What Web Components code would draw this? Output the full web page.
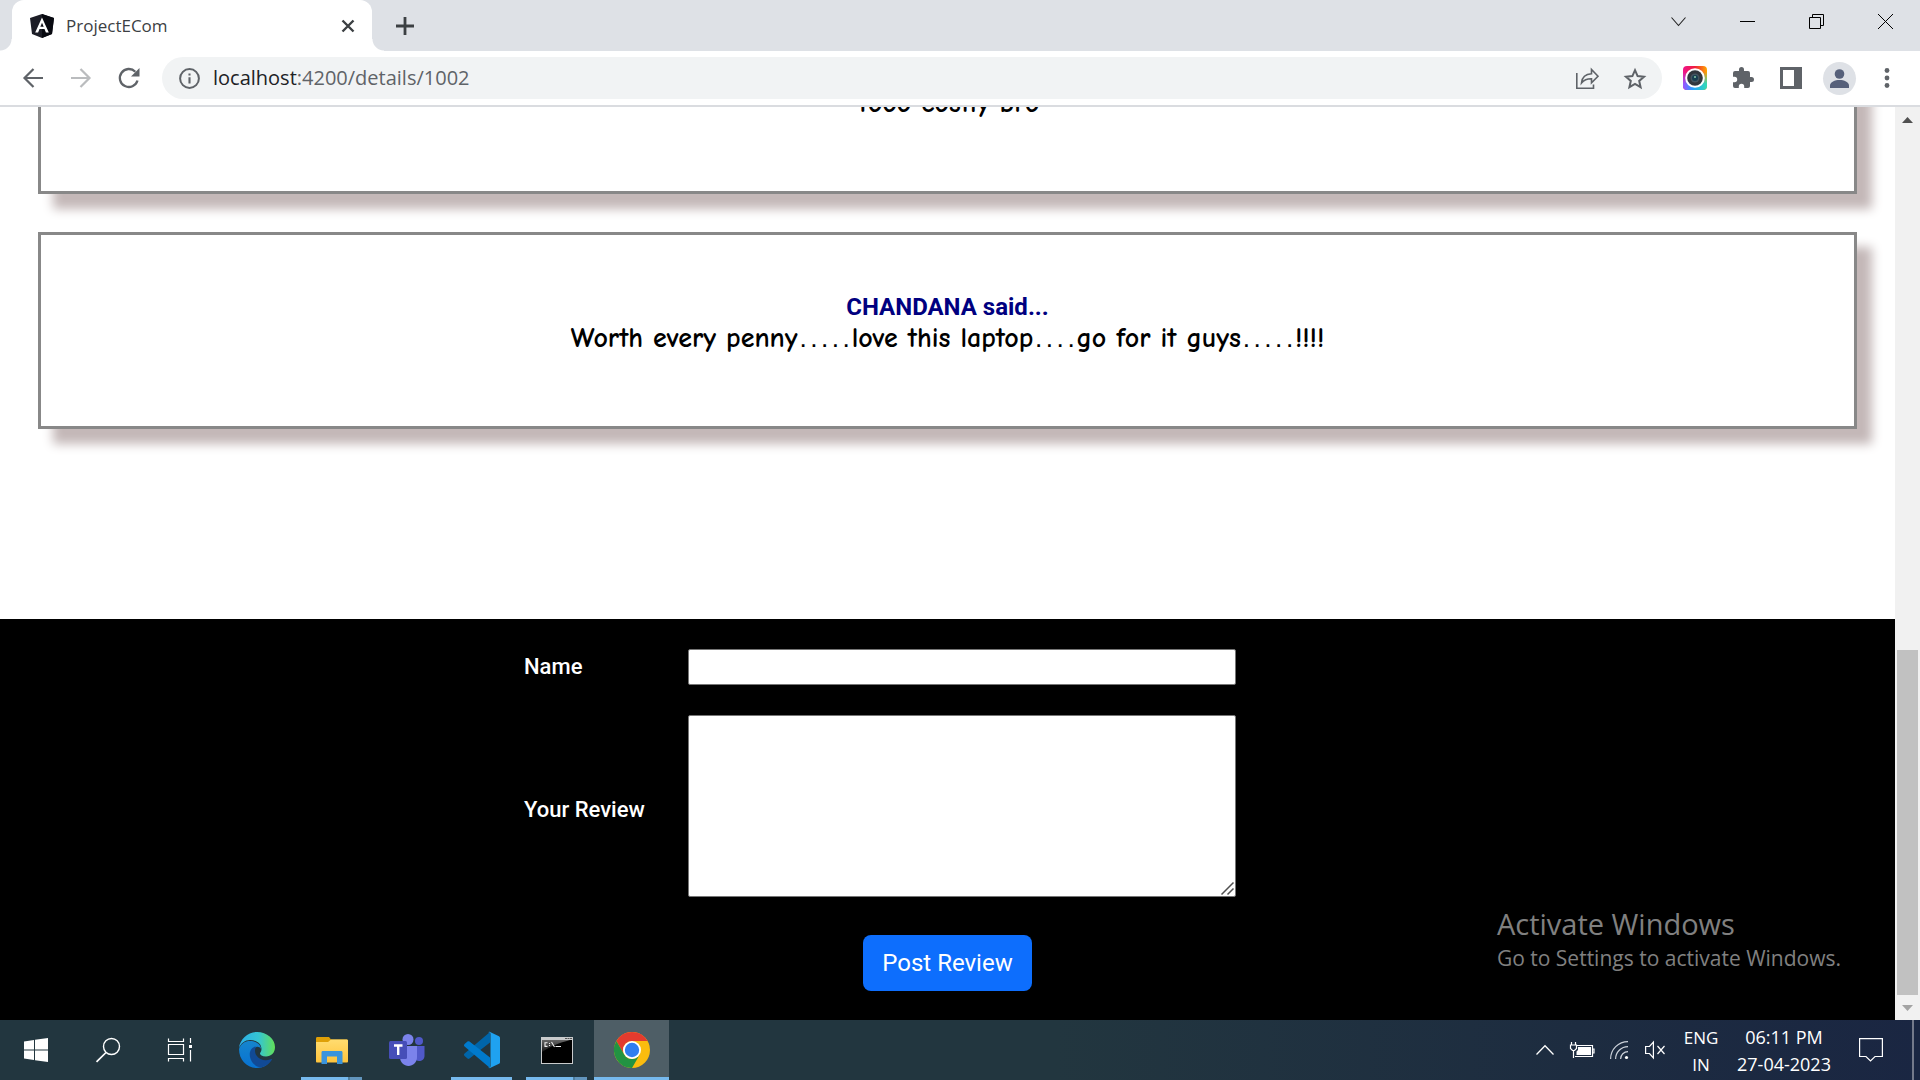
<!DOCTYPE html>
<html lang="en">
<head>
<meta charset="utf-8">
<title>ProjectECom</title>
<style>
html, body { margin: 0; height: 100%; }
body { font-family: "Open Sans", "Noto Sans", sans-serif; overflow: hidden; }
</style>
</head>
<body>
<desktop-screen></desktop-screen>
<script>
const base = `<style>
*, *::before, *::after { box-sizing: border-box; }
button { border: 0; padding: 0; margin: 0; background: none; color: inherit; font: inherit; cursor: pointer; display: flex; align-items: center; justify-content: center; }
svg { display: block; flex: none; overflow: visible; }
</style>`;
function define(name, html) {
  const template = document.createElement('template');
  template.innerHTML = base + html;
  customElements.define(name, class extends HTMLElement {
    constructor() {
      super();
      this.attachShadow({ mode: 'open' }).append(template.content.cloneNode(true));
    }
  });
}

define('browser-tabs', `<style>
:host { display: flex; height: 51px; background: #dee1e6; padding-left: 12px; color: #3c4043; }
.tab { position: relative; width: 360px; height: 51px; background: #fff; border-radius: 12px 12px 0 0; display: flex; align-items: center; gap: 12px; padding: 0 12px 0 18px; }
.tab::before, .tab::after { content: ""; position: absolute; bottom: 0; width: 12px; height: 12px; }
.tab::before { right: 100%; background: radial-gradient(circle at 0 0, transparent 11px, #fff 12px); }
.tab::after { left: 100%; background: radial-gradient(circle at 100% 0, transparent 11px, #fff 12px); }
.title { flex: 1; font-size: 17px; line-height: 24px; }
.close { width: 24px; height: 24px; }
.new { width: 42px; height: 51px; margin-left: 12px; }
.controls { margin-left: auto; display: flex; color: #000; }
.controls button { width: 69px; height: 43px; }
</style>
<div class="tab">
  <svg width="24" height="24" viewBox="0 0 24 24"><path d="M12 0 24 4l-2 16-10 4L2 20 0 4z" fill="#1c1d26"/><path d="M12 0 24 4l-2 16-10 4z" fill="#080910"/><path d="M12 3.4 5.2 18.6h2.9l1.4-3.5h5l1.4 3.5h2.9zM12 8.8l1.7 4h-3.4z" fill="#fff" fill-rule="evenodd"/></svg>
  <span class="title">ProjectECom</span>
  <button class="close" aria-label="Close tab"><svg width="12" height="12" viewBox="0 0 12 12"><path d="M.5.5l11 11M11.500.5l-11 11" stroke="#3c4043" stroke-width="2.400"/></svg></button>
</div>
<button class="new" aria-label="New tab"><svg width="18" height="18" viewBox="0 0 18 18"><path d="M9 0v18M0 9h18" stroke="#3c4043" stroke-width="2.800"/></svg></button>
<div class="controls">
  <button aria-label="Search tabs"><svg width="15" height="9" viewBox="0 0 15 9"><path d="M.5.5l7 8 7-8" fill="none" stroke="#222" stroke-width="1.100"/></svg></button>
  <button aria-label="Minimize"><svg width="15" height="1"><path d="M0 .5h15" stroke="#000"/></svg></button>
  <button aria-label="Restore"><svg width="15" height="15" viewBox="0 0 15 15"><path d="M.5 3.500h11v11H.5zM3.500 3V.5h11v11H12" fill="none" stroke="#000"/></svg></button>
  <button aria-label="Close"><svg width="15" height="15" viewBox="0 0 15 15"><path d="M0 0l15 15M15 0L0 15" stroke="#000"/></svg></button>
</div>`);

define('browser-toolbar', `<style>
:host { display: flex; align-items: center; height: 56px; padding: 0 9px; background: #fff; border-bottom: 2px solid #dadce0; color: #5f6368; }
button { width: 48px; height: 42px; }
.omnibox { flex: 1; margin: 0 9px; height: 42px; border-radius: 21px; background: #f1f3f4; display: flex; align-items: center; padding: 0 3px; }
.address { flex: 1; font-size: 20px; line-height: 28px; outline: none; }
.address b { font-weight: 400; color: #202124; }
</style>
<button aria-label="Back"><svg width="20" height="20" viewBox="0 0 20 20"><path d="M20 10H2M10.500 1 1.500 10l9 9" fill="none" stroke="#5f6368" stroke-width="2.200"/></svg></button>
<button aria-label="Forward"><svg width="20" height="20" viewBox="0 0 20 20"><path d="M0 10h18M9.500 1l9 9-9 9" fill="none" stroke="#babcbe" stroke-width="2.200"/></svg></button>
<button aria-label="Reload"><svg width="20" height="20" viewBox="0 0 20 20"><path d="M18.500 12.500A9 9 0 1 1 16.300 3.700" fill="none" stroke="#5f6368" stroke-width="2.300"/><path d="M20.500 0v8.500H12z" fill="#5f6368"/></svg></button>
<div class="omnibox">
  <button aria-label="View site information"><svg width="21" height="21" viewBox="0 0 21 21"><circle cx="10.500" cy="10.500" r="9.400" fill="none" stroke="#5f6368" stroke-width="2"/><path d="M10.500 9.300v6.200M10.500 5.400v2.200" stroke="#5f6368" stroke-width="2.100"/></svg></button>
  <div class="address" role="textbox" aria-label="Address" contenteditable="true" spellcheck="false"><b>localhost</b>:4200/details/1002</div>
  <button aria-label="Share"><svg width="23" height="21" viewBox="0 0 23 21"><path d="M.8 5v15.200h16.700V16.500" fill="none" stroke="#5f6368" stroke-width="1.600"/><path d="M5.500 15c.6-6 4-9 10-9.200V1.500l6.500 6.800-6.500 6.500v-4C11 10.700 8 12 5.500 15z" fill="none" stroke="#5f6368" stroke-width="1.600"/></svg></button>
  <button aria-label="Bookmark"><svg width="22" height="21" viewBox="0 0 22 21"><path d="M11 2.200l2.600 5.900 6.400.6-4.800 4.200 1.400 6.300L11 15.900l-5.600 3.300 1.400-6.300L2 8.700l6.400-.6z" fill="none" stroke="#5f6368" stroke-width="2"/></svg></button>
</div>
<button aria-label="Capture extension"><svg width="24" height="24" viewBox="0 0 24 24"><defs><linearGradient id="a"><stop stop-color="#f0148c"/><stop offset=".5" stop-color="#f01e3c"/><stop offset="1" stop-color="#ffa800"/></linearGradient><linearGradient id="b"><stop stop-color="#a050ff"/><stop offset=".4" stop-color="#28a0ff"/><stop offset="1" stop-color="#32dcb4"/></linearGradient><linearGradient id="m" x2="0" y2="1"><stop offset=".25" stop-color="#000"/><stop offset=".75" stop-color="#fff"/></linearGradient><mask id="k"><rect width="24" height="24" fill="url(#m)"/></mask></defs><rect width="24" height="24" rx="4" fill="url(#a)"/><rect width="24" height="24" rx="4" fill="url(#b)" mask="url(#k)"/><circle cx="12" cy="12" r="9.800" fill="#fff"/><circle cx="12" cy="12" r="7.800" fill="#30363d"/><circle cx="12" cy="12" r="4.500" fill="#445460"/><circle cx="12" cy="12" r="3" fill="#173e50"/><circle cx="12" cy="11" r="1" fill="#8ca"/></svg></button>
<button aria-label="Extensions"><svg width="24" height="24" viewBox="0 0 24 24"><path d="M20.500 11H19V7a2 2 0 0 0-2-2h-4V3.500a2.500 2.500 0 0 0-5 0V5H4a2 2 0 0 0-2 2v3.800h1.500a2.700 2.700 0 0 1 0 5.400H2V20a2 2 0 0 0 2 2h3.800v-1.500a2.700 2.700 0 0 1 5.400 0V22H17a2 2 0 0 0 2-2v-4h1.500a2.500 2.500 0 0 0 0-5z" fill="#5f6368"/></svg></button>
<button aria-label="Side panel"><svg width="22" height="22" viewBox="0 0 22 22"><path d="M0 0h22v22H0zM3 3v16h11V3z" fill="#5f6368" fill-rule="evenodd"/></svg></button>
<button aria-label="Profile"><svg width="33" height="33" viewBox="0 0 33 33"><circle cx="16.500" cy="16.500" r="16.500" fill="#dee1e6"/><circle cx="16.500" cy="12" r="4.800" fill="#56607a"/><path d="M7 26v-2.500c0-3.500 5-5.500 9.500-5.500s9.500 2 9.500 5.500V26z" fill="#56607a"/></svg></button>
<button aria-label="Menu"><svg width="6" height="20" viewBox="0 0 6 20"><g fill="#5f6368"><circle cx="3" cy="2.500" r="2.400"/><circle cx="3" cy="10" r="2.400"/><circle cx="3" cy="17.500" r="2.400"/></g></svg></button>`);

define('review-card', `<style>
:host { display: flex; flex-direction: column; justify-content: flex-end; height: 197px; flex: none; margin: 0 2%; border: 3px solid #888; box-shadow: 15px 15px 10px #c4b8b8; background: #fff; padding: 0 24px 73px; text-align: center; }
h2 { margin: 0; font: 700 24px/31px Roboto, sans-serif; color: #000080; }
p { margin: 0; font: 700 28px/30px "Comic Sans MS", "Comic Neue", "DejaVu Sans", sans-serif; color: #000; }
::slotted(.dots) { font: 700 18px/18px "Liberation Mono", monospace; }
</style>
<h2><slot name="author"></slot></h2><p><slot></slot></p>`);

define('review-form', `<style>
:host { display: block; flex: none; background: #000; color: #fff; font-family: Roboto, sans-serif; padding: 30px 0 29px; }
form { display: flex; flex-direction: column; align-items: center; gap: 31px; }
.fields { display: grid; grid-template-columns: 164px 548px 135px; row-gap: 30px; align-items: center; }
label { grid-column: 1; font-size: 22px; line-height: 24px; font-weight: 500; }
input, textarea { grid-column: 2; display: block; width: 100%; margin: 0; border: 1px solid #767676; border-radius: 2px; background: #fff; font: inherit; }
input { height: 36px; }
textarea { height: 182px; margin-bottom: 7px; resize: both; }
textarea::-webkit-resizer { background: url("data:image/svg+xml,%3Csvg xmlns='http://www.w3.org/2000/svg' viewBox='0 0 15 15'%3E%3Cpath d='M1.500 13.500l12-12M7.500 13.500l6-6' stroke='%23505050' stroke-width='1.500'/%3E%3C/svg%3E") right bottom / 15px 15px no-repeat; }
button { background: #0d6efd; color: #fff; font-size: 24px; line-height: 36px; padding: 10px 19px; border-radius: 8px; }
</style>
<form>
  <div class="fields">
    <label for="name">Name</label><input id="name" type="text">
    <label for="review">Your Review</label><textarea id="review"></textarea>
  </div>
  <button type="button">Post Review</button>
</form>`);

define('page-scrollbar', `<style>
:host { display: flex; flex-direction: column; width: 25px; flex: none; background: #f1f1f1; }
button { height: 25px; }
.track { flex: 1; display: flex; align-items: flex-end; padding: 0 2px; }
.thumb { width: 100%; height: 40%; background: #c1c1c1; }
</style>
<button aria-label="Scroll up"><svg width="11" height="6"><path d="M0 6 5.500 0 11 6z" fill="#505050"/></svg></button>
<div class="track"><div class="thumb"></div></div>
<button aria-label="Scroll down"><svg width="11" height="6"><path d="M0 0h11L5.500 6z" fill="#a3a3a3"/></svg></button>`);

define('activation-notice', `<style>
:host { display: block; color: #808080; }
p { margin: 0; font-size: 21px; line-height: 28px; }
.head { font-size: 29px; line-height: 40px; }
</style><p class="head">Activate Windows</p><p>Go to Settings to activate Windows.</p>`);

define('task-bar', `<style>
:host { display: flex; height: 60px; flex: none; color: #fff; background: linear-gradient(90deg, #22363f 0%, #22363f 55%, #1d2c40 82%, #1a2642 100%); }
.start, .apps, .tray { display: flex; }
.start button { width: 72px; }
.apps { margin-left: 3px; }
.apps button { width: 75px; position: relative; }
.apps .open::after { content: ""; position: absolute; left: 7px; right: 7px; bottom: 0; height: 3px; background: #76b9ed; }
.apps .multi::after { background: linear-gradient(90deg, #76b9ed 47px, #4f7f9f 47px, #4f7f9f 49px, #6295bd 49px); }
.apps .active { background: #4e5e66; }
.apps .active::after { left: 0; right: 0; }
.tray { margin-left: auto; }
.tray button { width: 36px; }
.tray .text { flex-direction: column; font-size: 17px; line-height: 27px; padding-top: 1px; }
.tray .lang { width: 56px; margin-right: 8px; }
.tray .clock { width: 94px; font-size: 18px; }
.tray .notes { width: 80px; }
.tray .desk { width: 8px; border-left: 2px solid #73798a; margin-left: 1px; }
.tray .wifi { width: 37px; }
</style>
<div class="start">
  <button aria-label="Start"><svg width="24" height="24" viewBox="0 0 24 24"><path d="M0 3.400 10 2v9.500H0zM11 1.800 24 0v11.500H11zM0 12.500h10V22L0 20.600zM11 12.500h13V24L11 22.200z" fill="#fff"/></svg></button>
  <button aria-label="Search"><svg width="24" height="24" viewBox="0 0 24 24"><circle cx="15.500" cy="8.500" r="8" fill="none" stroke="#fff" stroke-width="1.400"/><path d="M10 14.500.5 23.800" stroke="#fff" stroke-width="1.700"/></svg></button>
  <button aria-label="Task view"><svg width="24" height="24" viewBox="0 0 24 24"><path d="M.5.5v3h15v-3M.5 6.500h15v10H.5zM.5 23.500v-3h15v3M22.500 0v5M22.500 12v11.500" fill="none" stroke="#fff" stroke-width="1.200"/><path d="M21 7h3v3h-3z" fill="#fff"/></svg></button>
</div>
<div class="apps">
  <button aria-label="Microsoft Edge"><svg width="36" height="36" viewBox="0 0 36 36"><defs><linearGradient id="e1" x1="0" x2="1"><stop stop-color="#2aaee8"/><stop offset=".55" stop-color="#35c5d2"/><stop offset="1" stop-color="#62df58"/></linearGradient><linearGradient id="e2" x2="0" y2="1"><stop stop-color="#1585cd"/><stop offset="1" stop-color="#0872d2"/></linearGradient></defs><path d="M0 16C1 7 9 0 18 0c10 0 18 7 18 15 0 6-4 9.500-9 9.500-4 0-6-1.500-6-3 0-1 1.500-1.500 1.500-4.500C22.500 11 17 8 11 8 6 8 2 11 0 16z" fill="url(#e1)"/><path d="M0 17C2 11.500 6 9 11 9c6 0 11 3.500 11 8-1-2-3-2.500-4.500-2-4 1.500-5 7-2 11 4 5 11 5.500 16.500 2C29 33 24 36 18 36 8 36 0 28 0 17z" fill="url(#e2)"/><path d="M17.500 14.500C12 15 10 20 11 25c1 5 5 10 11 10.500 5-1 9-4.500 11-8-.5-.8-1-.5-2 0-5 2-11 0-13.500-4-2-3-2-7 0-9z" fill="#114a96"/></svg></button>
  <button class="open multi" aria-label="File Explorer"><svg width="32" height="27" viewBox="0 0 32 27"><defs><linearGradient id="f1" x2="0" y2="1"><stop stop-color="#ffdc70"/><stop offset="1" stop-color="#ffc43c"/></linearGradient></defs><path d="M0 1.500C0 .5.500 0 1.500 0H13l2 2.500h15.500c1 0 1.500.5 1.500 1.500V10H0z" fill="#dfa007"/><path d="M0 5h12l3-2.500h15.500c1 0 1.500.5 1.500 1.500v20.500c0 .5-.5 1-1 1H1c-.5 0-1-.5-1-1z" fill="url(#f1)"/><path d="M5.500 27V15.500c0-1 .5-1.500 1.500-1.500h18c1 0 1.500.5 1.500 1.500V27H21v-7.500H11V27z" fill="#3a94dc"/></svg></button>
  <button aria-label="Microsoft Teams"><svg width="36" height="32" viewBox="0 0 36 32"><circle cx="30" cy="7" r="4" fill="#5059c9"/><circle cx="19" cy="5.500" r="5.500" fill="#7b83eb"/><path d="M26 12h9.500v10c0 3-2.500 5-5.500 5-2 0-4-1-4-3z" fill="#5059c9"/><path d="M11 12h17v11c0 5.500-4 9-8.500 9S11 28.500 11 23z" fill="#7b83eb"/><rect y="7" width="18" height="18" rx="1.500" fill="#464eb8"/><path d="M5 11.500h8.500M9.200 11.500V21" stroke="#fff" stroke-width="2.400"/></svg></button>
  <button class="open" aria-label="Visual Studio Code"><svg width="36" height="36" viewBox="0 0 36 36"><path d="M26 0v10.500L5.500 26.500c-.7.5-1.500.5-2 0L.6 24c-.8-.8-.8-1.800 0-2.500z" fill="#0065a9"/><path d="M26 36V25.500L5.500 9.500c-.7-.5-1.500-.5-2 0L.6 12c-.8.8-.8 1.800 0 2.500z" fill="#007acc"/><path d="M26 0l9 4.200c.6.300 1 1 1 1.600v24.400c0 .6-.4 1.300-1 1.600L26 36c-1 .3-1.500.1-2-.4 1.200.6 2.500 0 2.500-1.600V2c0-1.500-1.500-2.200-2.500-1.600.5-.5 1-.7 2-.4z" fill="#1fa2f0"/></svg></button>
  <button class="open multi" aria-label="Command Prompt"><svg width="32" height="27" viewBox="0 0 32 27"><defs><linearGradient id="c1" x2="0" y2="1"><stop stop-color="#666"/><stop offset="1" stop-color="#151515"/></linearGradient></defs><path d="M0 0h32v27H0z" fill="#c9cbcc"/><path d="M1 3h30v23H1z" fill="#000"/><path d="M1 3h28C18 6 10 9 1 15z" fill="url(#c1)"/><path d="M6.500 5.700H4v3.700h2.500M8.500 6v1M8.500 8v1M10.500 5l3 5M14.500 9.500H20" stroke="#eee" stroke-width="1.100" fill="none"/><path d="M24 1.500h7" stroke="#555" stroke-dasharray="2 .5"/></svg></button>
  <button class="open active" aria-label="Google Chrome"><svg width="36" height="36" viewBox="0 0 36 36"><circle cx="18" cy="18" r="18" fill="#fbbc0e"/><path d="M2.400 9A18 18 0 0 1 33.600 9H18a9 9 0 0 0-7.800 13.500z" fill="#e33b2e"/><path d="M2.400 9A18 18 0 0 0 18 36l7.800-13.500a9 9 0 0 1-15.600 0z" fill="#229342"/><circle cx="18" cy="18" r="9" fill="#fff"/><circle cx="18" cy="18" r="7.200" fill="#2f7def"/></svg></button>
</div>
<div class="tray">
  <button aria-label="Show hidden icons"><svg width="18" height="10" viewBox="0 0 18 10"><path d="M.5 9.500 9 .8l8.500 8.700" fill="none" stroke="#fff" stroke-width="1.300"/></svg></button>
  <button class="wifi" aria-label="Battery"><svg width="24" height="16" viewBox="0 0 24 16"><path d="M7 3.500h15.500v11H5M22.500 7H24v4h-1.500" fill="none" stroke="#fff" stroke-width="1.200"/><path d="M8 5h13v8H6.500V9.500L8 8z" fill="#fff"/><path d="M1.500 0v3M5.500 0v3M.5 3h6v3.500l-2 2h-2l-2-2zM3.500 9v7" fill="none" stroke="#fff" stroke-width="1.200"/></svg></button>
  <button class="wifi" aria-label="Network"><svg width="18" height="18" viewBox="0 0 18 18"><g fill="none" stroke="#ccd2da" stroke-width="1.200"><path d="M.6 18A17.400 17.400 0 0 1 18 .6"/><path d="M5.600 18A12.400 12.400 0 0 1 18 5.600"/><path d="M10.600 18a7.400 7.400 0 0 1 7.400-7.400"/></g><circle cx="16.500" cy="16.500" r="1.600" fill="#fff"/></svg></button>
  <button aria-label="Volume muted"><svg width="20" height="18" viewBox="0 0 20 18"><path d="M.6 5.500h3.900L8.400 1v16l-3.900-4.500H.6z" fill="none" stroke="#fff" stroke-width="1.200"/><path d="M12.500 5l7 8M19.500 5l-7 8" stroke="#fff" stroke-width="1.200"/></svg></button>
  <button class="text lang"><span>ENG</span><span>IN</span></button>
  <button class="text clock"><span>06:11 PM</span><span>27-04-2023</span></button>
  <button class="notes" aria-label="Notifications"><svg width="24" height="24" viewBox="0 0 24 24"><path d="M.6.600h22.800v17.900H16L11.500 23 7 18.500H.6z" fill="none" stroke="#fff" stroke-width="1.200"/></svg></button>
  <button class="desk" aria-label="Show desktop"></button>
</div>`);

define('desktop-screen', `<style>
:host { display: flex; flex-direction: column; height: 100vh; background: #fff; }
.view { flex: 1; min-height: 0; display: flex; position: relative; }
main { flex: 1; min-width: 0; overflow: hidden; display: flex; flex-direction: column; justify-content: flex-end; }
.reviews { display: flex; flex-direction: column; flex: none; gap: 38px; padding-bottom: 190px; }
activation-notice { position: absolute; right: 79px; bottom: 48px; }
</style>
<browser-tabs></browser-tabs>
<browser-toolbar></browser-toolbar>
<div class="view">
  <main>
    <div class="reviews">
      <review-card>Tooo costly bro</review-card>
      <review-card><span slot="author">CHANDANA said...</span>Worth every penny<span class="dots">.....</span>love this laptop<span class="dots">....</span>go for it guys<span class="dots">.....</span>!!!!</review-card>
    </div>
    <review-form></review-form>
  </main>
  <page-scrollbar></page-scrollbar>
  <activation-notice></activation-notice>
</div>
<task-bar></task-bar>`);
</script>
</body>
</html>
